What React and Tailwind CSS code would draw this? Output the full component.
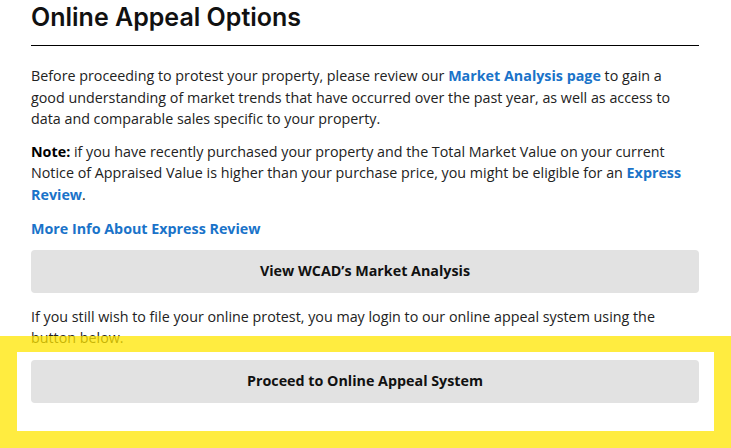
export default function App() {
  const body = { fontFamily: '"Open Sans", "Liberation Sans", sans-serif' }
  return (
    <div className="relative w-[731px] h-[448px] overflow-hidden bg-white" style={body}>
      <div className="pl-[31px] pr-[32px] pt-0">
        <h1
          className="text-[25px] font-semibold leading-[32px] text-[#111] mt-[1px]"
          style={{ fontFamily: 'Inter, "Open Sans", sans-serif' }}
        >
          Online Appeal Options
        </h1>
        <hr className="mt-[12px] border-0 h-px bg-black" />

        <p className="mt-[19px] text-[14.3px] leading-[21.5px] text-[#222]">
          Before proceeding to protest your property, please review our{' '}
          <a className="font-bold text-[#1a73c9]">Market Analysis page</a> to gain a good understanding of market
          trends that have occurred over the past year, as well as access to data and comparable sales specific to
          your property.
        </p>

        <p className="mt-[11px] text-[14.3px] leading-[21.5px] text-[#222]">
          <strong className="font-bold text-black">Note:</strong> if you have recently purchased your property and the
          Total Market Value on your current Notice of Appraised Value is higher than your purchase price, you might be
          eligible for an <a className="font-bold text-[#1a73c9]">Express Review</a>.
        </p>

        <p className="mt-[13px] text-[14.3px] leading-[21.5px]">
          <a className="font-bold text-[#1a73c9]">More Info About Express Review</a>
        </p>

        <button className="mt-[10px] w-full h-[43px] rounded-[4px] bg-[#e2e2e2] text-[14.3px] font-bold text-[#111]">
          View WCAD’s Market Analysis
        </button>

        <p className="mt-[13px] text-[14.3px] leading-[21.5px] text-[#222]">
          If you still wish to file your online protest, you may login to our online appeal system using the button
          below.
        </p>

        <button className="mt-[11px] w-full h-[43px] rounded-[4px] bg-[#e2e2e2] text-[14.3px] font-bold text-[#111]">
          Proceed to Online Appeal System
        </button>
      </div>

      <div className="absolute left-0 right-0 top-[336px] bottom-0 border-[17px] border-t-[16px] border-[rgba(255,230,0,0.75)]" />
    </div>
  )
}
